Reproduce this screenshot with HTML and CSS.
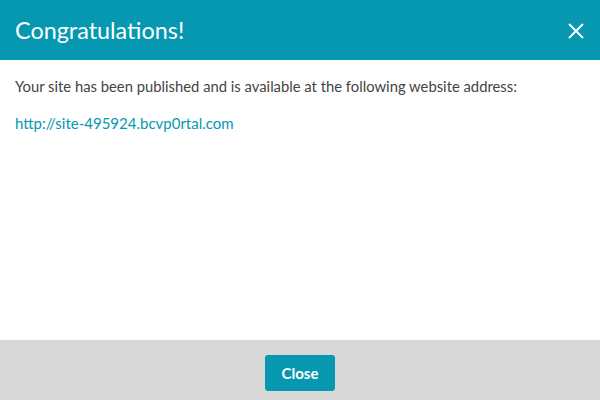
FILE: index.html
```html
<!DOCTYPE html>
<html>
<head>
<meta charset="utf-8">
<link rel="stylesheet" href="styles.css">
</head>
<body>
<div class="modal">
  <header class="modal-header">
    <h1 class="modal-title">Congratulations!</h1>
    <button class="modal-x" aria-label="Close">
      <svg width="16" height="16" viewBox="0 0 16 16"><path d="M1 1L15 15M15 1L1 15" stroke="#fff" stroke-width="2" fill="none"/></svg>
    </button>
  </header>
  <main class="modal-body">
    <p class="msg">Your site has been published and is available at the following website address:</p>
    <p class="msg"><a class="site-link" href="#">http://site-495924.bcvp0rtal.com</a></p>
  </main>
  <footer class="modal-footer">
    <button class="btn-close">Close</button>
  </footer>
</div>
</body>
</html>
```
FILE: styles.css
```css
html, body { margin: 0; padding: 0; }
body { font-family: Lato, "Open Sans", sans-serif; background: #fff; }
.modal { width: 600px; height: 400px; display: flex; flex-direction: column; }
.modal-header { height: 60px; background: #0598b0; display: flex; align-items: center; justify-content: space-between; padding: 0 15px; box-sizing: border-box; }
.modal-title { margin: 0; font-size: 23.4px; font-weight: 400; color: #fff; }
.modal-x { background: none; border: 0; padding: 0; width: 16px; height: 16px; display: flex; margin-right: 1px; margin-top: 1px; }
.modal-body { flex: 1; padding: 16px 15px 0; }
.msg { margin: 0 0 17px; font-size: 15px; line-height: 20px; color: #444; }
.msg:first-child { font-size: 14.8px; }
.site-link { color: #0598b0; text-decoration: none; }
.modal-footer { height: 60px; background: #d8d8d8; display: flex; align-items: center; justify-content: center; }
.btn-close { width: 70px; height: 36px; border: 0; border-radius: 3px; background: #0598b0; color: #fff; font-family: Lato, sans-serif; font-weight: 700; font-size: 15px; margin-top: 5px; }
```
